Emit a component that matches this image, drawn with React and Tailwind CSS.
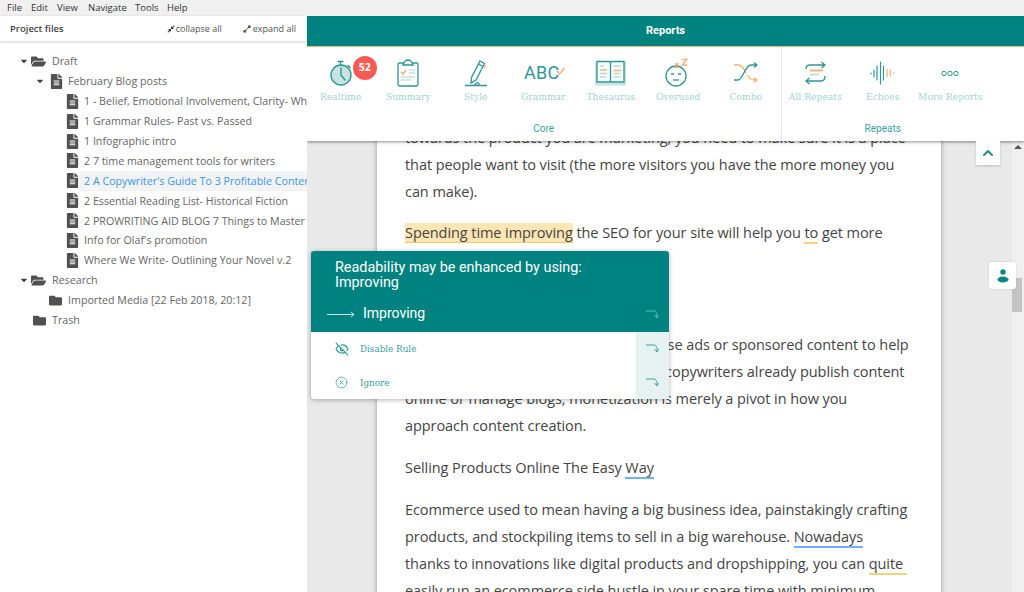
import React from 'react';
import { FaCaretDown, FaFolder, FaFolderOpen, FaFileAlt, FaCompressAlt, FaExpandAlt } from 'react-icons/fa';
import { EyeOff, CircleX, ChevronUp } from 'lucide-react';

const TEAL = '#2b9895';
const ORANGE = '#f9b071';

const tree = [
  { depth: 'pl-[20px]', arrow: true, icon: 'open', label: 'Draft' },
  { depth: 'pl-[36px]', arrow: true, icon: 'file', label: 'February Blog posts' },
  { depth: 'pl-[52px]', icon: 'file', label: '1 - Belief, Emotional Involvement, Clarity- What Makes a Great Blog Post' },
  { depth: 'pl-[52px]', icon: 'file', label: '1 Grammar Rules- Past vs. Passed' },
  { depth: 'pl-[52px]', icon: 'file', label: '1 Infographic intro' },
  { depth: 'pl-[52px]', icon: 'file', label: '2 7 time management tools for writers' },
  { depth: 'pl-[52px]', icon: 'file', label: "2 A Copywriter's Guide To 3 Profitable Content Strategies", selected: true },
  { depth: 'pl-[52px]', icon: 'file', label: '2 Essential Reading List- Historical Fiction' },
  { depth: 'pl-[52px]', icon: 'file', label: '2 PROWRITING AID BLOG 7 Things to Master in Your Writing' },
  { depth: 'pl-[52px]', icon: 'file', label: "Info for Olaf's promotion" },
  { depth: 'pl-[52px]', icon: 'file', label: 'Where We Write- Outlining Your Novel v.2' },
  { depth: 'pl-[20px]', arrow: true, icon: 'open', label: 'Research' },
  { depth: 'pl-[36px]', icon: 'folder', label: 'Imported Media [22 Feb 2018, 20:12]' },
  { depth: 'pl-[20px]', icon: 'folder', label: 'Trash' },
];

function TreeRow({ row }) {
  return (
    <div className={`flex h-[19.9px] items-center ${row.depth}`}>
      <div className="flex w-[11px] shrink-0 items-center">
        {row.arrow && <FaCaretDown size={10} className="-ml-[1px] text-[#444]" />}
      </div>
      <div className="flex w-[21px] shrink-0 items-center text-[#505050]">
        {row.icon === 'open' && <FaFolderOpen size={15} />}
        {row.icon === 'folder' && <FaFolder size={13} className="ml-[2px]" />}
        {row.icon === 'file' && <FaFileAlt size={15} className="ml-[2px]" />}
      </div>
      <div
        className={`-ml-1 flex h-full min-w-0 flex-1 items-center overflow-hidden whitespace-nowrap pl-1 text-[10.7px] ${
          row.selected ? 'bg-[#f1f3f5] text-[#3f96e2]' : 'text-[#666]'
        }`}
      >
        {row.label}
      </div>
    </div>
  );
}

function Stopwatch() {
  return (
    <svg width="26" height="28" viewBox="0 0 26 28" fill="none" stroke={TEAL} strokeWidth="1.4">
      <circle cx="13" cy="16" r="10" fill="#c9e3e2" />
      <path d="M10 2.500h5M12.500 2.500v3.500M20 6.500l2 2" strokeLinecap="round" />
      <path d="M13 9v7l4 5" strokeLinecap="round" />
    </svg>
  );
}

function Clipboard() {
  return (
    <svg width="24" height="28" viewBox="0 0 24 28" fill="none" stroke={TEAL} strokeWidth="1.3">
      <rect x="2" y="4" width="20" height="23" rx="1.500" />
      <path d="M8 4c0-1.500 2-3 4-3s4 1.500 4 3l1 2H7z" fill="#fff" />
      <path d="M5 13l2 2 3-3.500" stroke={ORANGE} strokeWidth="1.6" />
      <path d="M13 11h6M13 14h6M5 18h14M5 21h10" stroke="#c4dfde" />
    </svg>
  );
}

function Pencil() {
  return (
    <svg width="24" height="28" viewBox="0 0 24 28" fill="none" stroke={TEAL} strokeWidth="1.3">
      <path d="M16 2l4.500 2.500L12 21l-5 3 .5-5.500z" />
      <path d="M14.500 5l4.500 2.500" />
      <path d="M21.500 6l-1 3" stroke={ORANGE} />
      <path d="M1 26.500h22M11 26c1-3 4-3 4-1s-2 2-2 .5" />
    </svg>
  );
}

function Abc() {
  return (
    <svg width="42" height="18" viewBox="0 0 42 18" className="ml-1">
      <text x="0" y="15" fontFamily="Roboto, sans-serif" fontSize="18" fill={TEAL} letterSpacing="0.3">ABC</text>
      <path d="M33 7l2.500 3 5-6" fill="none" stroke={ORANGE} strokeWidth="1.4" />
    </svg>
  );
}

function Book() {
  return (
    <svg width="32" height="26" viewBox="0 0 32 26" fill="none" stroke={TEAL} strokeWidth="1.3">
      <path d="M1 2.500h29v22H1z" fill="#d7ecec" stroke="#c5e2e1" strokeWidth="2" />
      <path d="M2 1.500h12c1 0 1.500.5 1.500 1.500v19H2zM15.500 3c0-1 .5-1.500 1.500-1.500h12V22H15.500z" fill="#f9fcfc" />
      <path d="M5 6h4M5 17h6M18.500 6h7M18.500 17h7" stroke="#b9dad9" />
      <path d="M5 10h7M18.500 10.500h8" stroke={ORANGE} />
      <path d="M5 13.500h7M18.500 13.500h7" stroke="#b9dad9" />
    </svg>
  );
}

function Sleepy() {
  return (
    <svg width="28" height="30" viewBox="0 0 28 30" fill="none">
      <circle cx="12" cy="18" r="10" stroke={TEAL} strokeWidth="1.3" />
      <path d="M7 16h3M14 16h3" stroke={TEAL} strokeWidth="1.3" />
      <path d="M9 22h6" stroke={TEAL} strokeWidth="1.3" />
      <path d="M11 6h3l-3 3.500h3M18 1.500h5l-5 5.500h5" stroke={ORANGE} strokeWidth="1.3" />
    </svg>
  );
}

function Shuffle() {
  return (
    <svg width="26" height="22" viewBox="0 0 26 22" fill="none" strokeWidth="1.3">
      <path d="M1 3h4c5 0 6 5 8 8" stroke={ORANGE} />
      <path d="M1 18h4c5 0 7-15 13-15h6M21 .5L24 3l-3 2.500" stroke={TEAL} />
      <path d="M14 13c2 3 4 5 7 5h3M21 15.500l3 2.500-3 2.500" stroke={ORANGE} />
    </svg>
  );
}

function Repeats() {
  return (
    <svg width="21" height="24" viewBox="0 0 21 24" fill="none" strokeWidth="1.4">
      <path d="M1 8c0-3 2-4 4-4h15M16.500 1l3.500 3-3.500 3" stroke={TEAL} />
      <path d="M20 15c0 3-1 5-4 5H1M4.500 17L1 20l3.500 3" stroke={TEAL} />
      <path d="M5 9.500h13" stroke={ORANGE} strokeWidth="2" />
      <path d="M5 13.500h9" stroke="#c4dfde" strokeWidth="2" />
    </svg>
  );
}

function Echoes() {
  return (
    <svg width="25" height="24" viewBox="0 0 25 24" fill="none" strokeWidth="1.2" strokeLinecap="round">
      <path d="M1 12v1M4 9v7M7 5v14M10.500 1v22M13.500 5v14" stroke={TEAL} />
      <path d="M17 8v8M20.500 9v6M24 11.500v1" stroke={ORANGE} />
    </svg>
  );
}

function MoreDots() {
  return (
    <svg width="18" height="7" viewBox="0 0 18 7" fill="none" stroke={TEAL} strokeWidth="1">
      <circle cx="3" cy="3.500" r="2.200" />
      <circle cx="9" cy="3.500" r="2.200" />
      <circle cx="15" cy="3.500" r="2.200" />
    </svg>
  );
}

function ToolItem({ label, children }) {
  return (
    <div className="flex w-[67.5px] shrink-0 flex-col items-center">
      <div className="flex h-[30px] items-center justify-center">{children}</div>
      <div className="mt-[3px] whitespace-nowrap font-['DejaVu_Serif',serif] text-[9.2px] leading-3 text-[#a2d5d3]">{label}</div>
    </div>
  );
}

function CornerArrow({ color }) {
  return (
    <svg width="13" height="9" viewBox="0 0 13 9" fill="none" stroke={color} strokeWidth="0.9">
      <path d="M0 1h8c2 0 3 2 3 6M8.500 5l2.500 3 1.500-3" />
    </svg>
  );
}

function PopupAction({ icon, label }) {
  return (
    <div className="flex h-[33.5px] items-center">
      <div className="flex flex-1 items-center pl-6">
        <div className="flex w-[25px] items-center">{icon}</div>
        <span className="pt-[2px] font-['DejaVu_Serif',serif] text-[8.8px] text-[#3a9f9c]">{label}</span>
      </div>
      <div className="flex h-full w-[33px] items-center justify-center bg-[#e6f2f2]">
        <CornerArrow color="#2b9895" />
      </div>
    </div>
  );
}

export default function App() {
  return (
    <div className="flex h-[592px] w-[1024px] flex-col overflow-hidden bg-white font-['Open_Sans',sans-serif]">
      <div className="flex h-4 shrink-0 items-center bg-[#f0f0f0] pl-[7px] text-[9.500px] text-[#333]">
        <span className="w-6">File</span>
        <span className="w-[26px]">Edit</span>
        <span className="w-[31px]">View</span>
        <span className="w-[47px]">Navigate</span>
        <span className="w-8">Tools</span>
        <span>Help</span>
      </div>

      <div className="flex min-h-0 flex-1">
        <aside className="w-[307px] shrink-0 bg-white">
          <div className="flex h-[25px] items-center justify-between pl-[10px] pr-[11px] pt-[1px] shadow-[0_1px_3px_rgba(0,0,0,0.2)]">
            <span className="text-[9.500px] font-semibold text-[#444]">Project files</span>
            <div className="flex text-[9px] text-[#555]">
              <span className="flex items-center gap-[1px]">
                <FaCompressAlt size={8} className="text-[#333]" /> collapse all
              </span>
              <span className="ml-[21px] flex items-center gap-[2px]">
                <FaExpandAlt size={8} className="text-[#333]" /> expand all
              </span>
            </div>
          </div>
          <div className="pt-[10.5px]">
            {tree.map((row) => (
              <TreeRow key={row.label} row={row} />
            ))}
          </div>
        </aside>

        <main className="relative flex min-w-0 flex-1 overflow-hidden bg-[#e9e9e9]">
          <div className="min-w-0 flex-1 pl-[70px]">
            <div className="h-[640px] w-[564px] bg-white pl-7 pt-[108px] text-[14.5px] leading-[27px] tracking-[-0.07px] text-[#444] shadow-[0_0_5px_rgba(0,0,0,0.35)]">
              <p className="whitespace-nowrap">
                towards the product you are marketing, you need to make sure it is a place
                <br />
                that people want to visit (the more visitors you have the more money you
                <br />
                can make).
              </p>
              <p className="mt-[14px] whitespace-nowrap">
                <span className="border-b border-[#f6c667] bg-[#fde6b3]">Spending time improving</span> the SEO for your site will help you{' '}
                <span className="border-b-2 border-[#f8d27a]">to</span> get more
              </p>
              <p className="mt-[85px] whitespace-nowrap">
                Once you have traffic, you can readily use ads or sponsored content to help
                <br />
                you profit from your work. Since many copywriters already publish content
                <br />
                online or manage blogs, monetization is merely a pivot in how you
                <br />
                approach content creation.
              </p>
              <p className="mt-[15px]">
                Selling Products Online The Easy <span className="border-b-2 border-[#6fb1f5]">Way</span>
              </p>
              <p className="mt-[15px] whitespace-nowrap">
                Ecommerce used to mean having a big business idea, painstakingly crafting
                <br />
                products, and stockpiling items to sell in a big warehouse. <span className="border-b-2 border-[#6fb1f5]">Nowadays</span>
                <br />
                thanks to innovations like digital products and dropshipping, you can <span className="border-b-2 border-[#f8d27a]">quite&nbsp;</span>
                <br />
                easily run an ecommerce side hustle in your spare time with minimum
              </p>
            </div>
          </div>

          <div className="w-3 shrink-0 bg-[#f0f0f0]">
            <div className="ml-[2px] mt-[129px] h-0 w-0 border-x-[4px] border-b-[4px] border-x-transparent border-b-[#555]" />
            <div className="mt-[129px] h-[34px] w-[10px] bg-[#c4c4c4]" />
          </div>

          {/* reports toolbar sits over the document */}
          <div className="absolute inset-x-0 top-0 bg-white shadow-[0_1px_3px_rgba(0,0,0,0.45)]">
            <div className="box-content flex h-[29px] items-center justify-center border-b border-[#f0b56e] bg-[#008380] pt-[1px] font-['Roboto',sans-serif] text-[11px] font-bold text-white">
              Reports
            </div>
            <div className="flex h-[94px]">
              <div className="flex w-[474.500px] flex-col border-r border-[#e8e8e8] pt-[11px]">
                <div className="flex h-[63px]">
                  <ToolItem label="Realtime">
                    <div className="relative">
                      <Stopwatch />
                      <span className="absolute -right-[23px] -top-[3px] flex h-6 w-6 items-center justify-center rounded-full bg-[#fb5a52] text-[10.500px] font-bold text-white">
                        52
                      </span>
                    </div>
                  </ToolItem>
                  <ToolItem label="Summary"><Clipboard /></ToolItem>
                  <ToolItem label="Style"><Pencil /></ToolItem>
                  <ToolItem label="Grammar"><Abc /></ToolItem>
                  <ToolItem label="Thesaurus"><Book /></ToolItem>
                  <ToolItem label="Overused"><Sleepy /></ToolItem>
                  <ToolItem label="Combo"><Shuffle /></ToolItem>
                </div>
                <div className="text-center font-['Roboto',sans-serif] text-[10px] text-[#3ba3a0]">Core</div>
              </div>
              <div className="flex flex-col pt-[11px]">
                <div className="flex h-[63px]">
                  <ToolItem label="All Repeats"><Repeats /></ToolItem>
                  <ToolItem label="Echoes"><Echoes /></ToolItem>
                  <ToolItem label="More Reports"><MoreDots /></ToolItem>
                </div>
                <div className="text-center font-['Roboto',sans-serif] text-[10px] text-[#3ba3a0]">Repeats</div>
              </div>
            </div>
          </div>

          <button className="absolute left-[669px] top-[125px] flex h-6 w-6 items-center justify-center bg-white shadow-[0_1px_2px_rgba(0,0,0,0.2)]">
            <ChevronUp size={16} strokeWidth={3} className="text-[#1f8d8b]" />
          </button>

          <button className="absolute left-[682px] top-[246px] flex h-[27px] w-[27px] items-center justify-center rounded-[3px] bg-white shadow-[0_0_2px_rgba(0,0,0,0.15)]">
            <svg width="12" height="14" viewBox="0 0 12 14" fill="#0a8582">
              <circle cx="6" cy="3" r="2.700" />
              <ellipse cx="6" cy="10.500" rx="5.500" ry="3" />
            </svg>
          </button>

          {/* suggestion popup */}
          <div className="absolute left-1 top-[235px] w-[358px] overflow-hidden rounded-[3px] bg-white shadow-[0_1px_5px_rgba(0,0,0,0.3)]">
            <div className="h-[81px] bg-[#008380] text-white">
              <div className="pl-6 pt-[9px] font-['Roboto',sans-serif] text-[14.4px] leading-[15px]">
                Readability may be enhanced by using:
                <br />
                Improving
              </div>
              <div className="mt-[13px] flex items-center">
                <svg width="28" height="7" viewBox="0 0 28 7" fill="none" stroke="#fff" strokeWidth="0.8" className="ml-4 mt-[2px]">
                  <path d="M0 3.500h27M24 1l3 2.500L24 6" />
                </svg>
                <span className="ml-2 font-['Roboto',sans-serif] text-[14px]">Improving</span>
                <div className="ml-auto mr-[10px] mt-[2px]">
                  <CornerArrow color="#73bdbb" />
                </div>
              </div>
            </div>
            <PopupAction icon={<EyeOff size={14} className="text-[#2b9895]" />} label="Disable Rule" />
            <PopupAction icon={<CircleX size={13} strokeWidth={1.3} className="text-[#2b9895]" />} label="Ignore" />
          </div>
        </main>
      </div>
    </div>
  );
}
